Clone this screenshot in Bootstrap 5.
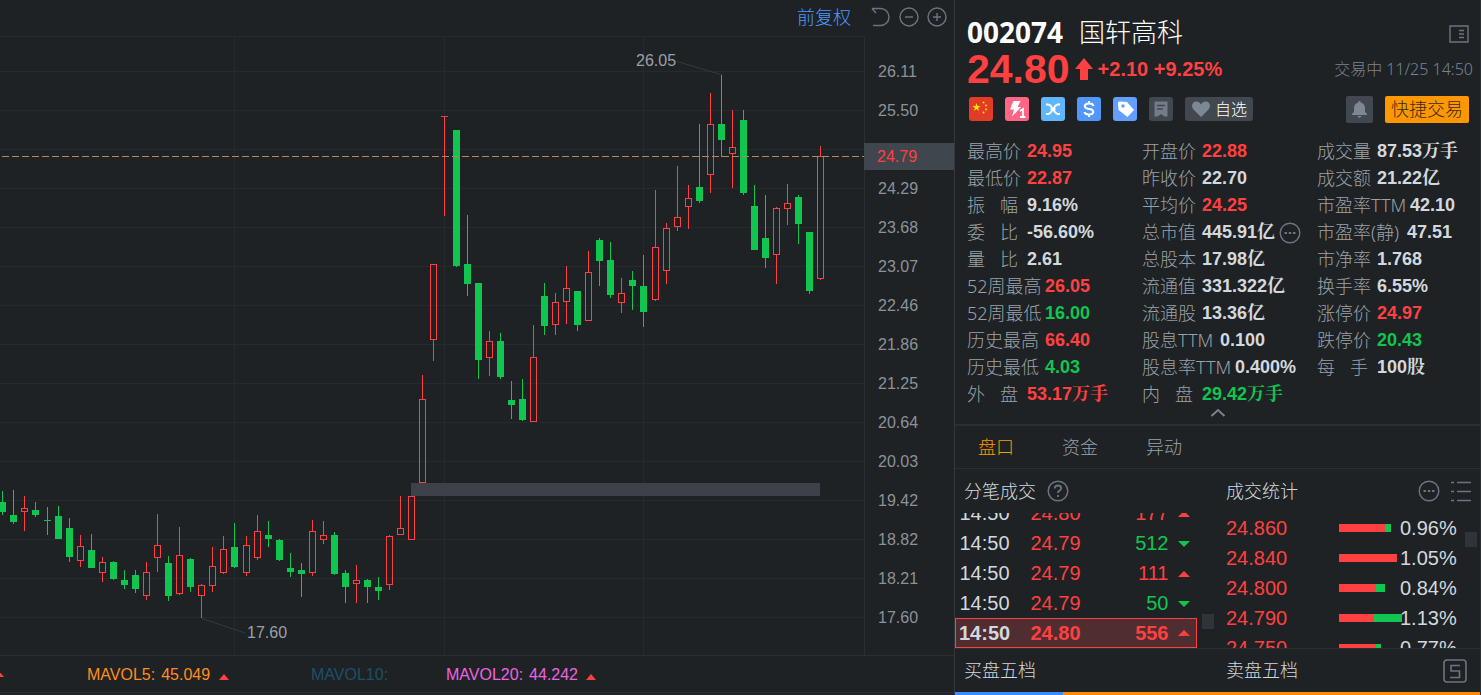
<!DOCTYPE html>
<html lang="zh-CN">
<head>
<meta charset="utf-8">
<meta name="viewport" content="width=device-width, initial-scale=1">
<title>国轩高科 002074</title>
<link href="https://cdn.jsdelivr.net/npm/bootstrap@5.3.0/dist/css/bootstrap.min.css" rel="stylesheet">
<style>
:root{--up:#ff4040;--down:#10c550;--line:#2b2f33;--dim:#9aa1a9;--ink:#d3d8df;--faint:#6b7480}
body{background:#1e2224;color:var(--ink);font-family:"Noto Sans","Noto Sans CJK SC",sans-serif;font-size:18px;font-weight:300;line-height:27px}
.num{font-family:"Liberation Sans","Noto Sans CJK SC",sans-serif}
.up{color:var(--up)}.down{color:var(--down)}
button{background:none;border:0;padding:0;color:inherit;font-weight:inherit}
svg{display:block;flex-shrink:0}
.app{height:100vh;min-height:695px;overflow:hidden}
.chart-pane{min-width:0;border-right:1px solid #33373b}
.chart-tools{height:36px;padding:0 7px 2px 0;gap:8px}
.chart-tools a{color:#4f98ff;margin-right:12px}
.plot{min-width:0}
.axis{width:90px;border-left:1px solid var(--line);border-top:1px solid transparent;padding:15px 0 0 13px;font-size:16px;font-weight:400;color:#8d9299}
.axis li{height:39px;line-height:39px}
.price-tag{top:106px;left:-1px;right:0;height:27px;padding-left:13px;background:#3f464d;line-height:27px}
.mavol{height:38px;border-top:1px solid var(--line);border-bottom:1px solid var(--line);font-size:16px;font-weight:400;margin-bottom:2px}
.mavol span+span{margin-left:6px}
.tri{display:inline-block;border:5px solid transparent;border-top:0;border-bottom:6px solid var(--up)}
.side{width:526px;flex:none;border-right:1px solid var(--line)}
.quote{padding:14px 7px 0 12px}
.title-row{height:36px;line-height:36px}.price-row{height:38px}.icon-row{height:28px;gap:12px;margin:7px 0 15px}
.code{font-size:28px;font-weight:700;color:#fff}
.stock{font-size:26px;color:#fff;margin-left:16px}
.price{font-size:41px;font-weight:700;line-height:38px}
.change{font-size:20px;font-weight:700}
.clock{font-size:16px;color:#7a8490;font-family:"Noto Sans","Noto Sans CJK SC",sans-serif}
.chip{width:24px;height:24px;border-radius:3px}
.watch{height:24px;width:68px;border-radius:3px;background:#414850;color:#fff;font-size:16px;gap:4px;line-height:24px}
.alarm{width:27px;height:27px;border-radius:2px;background:#414850}
.trade{width:84px;height:27px;border-radius:2px;background:#ff9800;color:#3a2b16;line-height:27px}
.facts{grid-template-columns:175px 175px 1fr}
.facts dl>div{height:27px;white-space:nowrap}
.facts dt{font-weight:300;color:var(--dim);width:60px;flex:none}
.facts dt.w4{width:78px}.facts dt.w5{width:90px}.facts dt.w6{width:93px}
.facts dt.pair{display:flex;justify-content:space-between;width:51px;margin-right:9px}
.facts dd{margin:0;font-family:"Liberation Sans","Noto Serif CJK SC","Noto Sans CJK SC",sans-serif;font-weight:700}
.fold{height:16px}
.tabs{height:45px;border-top:2px solid var(--line);border-bottom:1px solid var(--line);padding-left:23px;gap:48px}
.tabs a{color:var(--dim)}.tabs a.active{color:#ff9800}
.halves{grid-template-columns:262px 1fr}
.cap{height:44px;padding:0 9px;gap:11px}
.feed{height:135px;overflow:hidden}
.grid-t{font-size:20px;font-weight:400;line-height:30px;border-collapse:collapse;table-layout:fixed}
.grid-t td{padding:0;height:30px;white-space:nowrap}
.ticks{width:242px}.ticks td:first-child{padding-left:4px}
.ticks .tri,.ticks .trd{border-left-width:6px;border-right-width:6px;vertical-align:middle;margin:0 0 2px 9px}
.trd{display:inline-block;border:6px solid transparent;border-bottom:0;border-top-color:var(--down)}
.now td{font-weight:700;background:#4f2d30;height:29px;line-height:27px;border-top:1px solid var(--up);border-bottom:1px solid var(--up)}
.now td:first-child{border-left:1px solid var(--up);padding-left:3px}.now td:last-child{border-right:1px solid var(--up)}
.thumb{width:12px;height:15px;background:#2f343b}
.bar i{display:block;height:8px;flex:none;background:var(--up)}.bar i+i{background:var(--down)}
.levels{border-top:1px solid var(--line)}
.levels .cap{height:43px}
.ratio{height:3px;background:#ff8a00}
.ratio i{display:block;height:3px;background:#3b8cff}
</style>
</head>
<body>
<div class="app d-flex">
  <main class="chart-pane d-flex flex-column flex-grow-1">
    <div class="chart-tools d-flex align-items-center justify-content-end">
      <a href="#" class="text-decoration-none">前复权</a>
      <button aria-label="还原"><svg width="20" height="20" fill="none" stroke="#6b7480" stroke-width="1.4"><path d="M1 1.500h8.500a8.300 8.300 0 0 1 0 17H2M1 1.500l4 4.500"/></svg></button>
      <button aria-label="缩小"><svg width="20" height="20" fill="none" stroke="#6b7480" stroke-width="1.4"><circle cx="10" cy="10" r="9"/><path d="M6 10h8"/></svg></button>
      <button aria-label="放大"><svg width="20" height="20" fill="none" stroke="#6b7480" stroke-width="1.4"><circle cx="10" cy="10" r="9"/><path d="M6 10h8M10 6v8"/></svg></button>
    </div>
    <div class="d-flex flex-grow-1">
      <div class="plot flex-grow-1 overflow-hidden">
        <svg class="w-100 h-100" shape-rendering="crispEdges"><g id="k" transform="translate(0,-36)"></g></svg>
      </div>
      <div class="axis position-relative num">
        <ul class="list-unstyled m-0">
          <li>26.11</li><li>25.50</li><li></li><li>24.29</li><li>23.68</li><li>23.07</li><li>22.46</li><li>21.86</li><li>21.25</li><li>20.64</li><li>20.03</li><li>19.42</li><li>18.82</li><li>18.21</li><li>17.60</li>
        </ul>
        <div class="price-tag position-absolute up">24.79</div>
      </div>
    </div>
    <div class="mavol num d-flex align-items-center">
      <i class="tri" style="margin-left:-6px"></i>
      <div style="width:307px;padding-left:83px;color:#ff8d1e"><span>MAVOL5:</span><span>45.049</span> <i class="tri ms-1"></i></div>
      <div style="width:135px;color:#1c5068">MAVOL10:</div>
      <div style="color:#ee62e4"><span>MAVOL20:</span><span>44.242</span> <i class="tri ms-1"></i></div>
    </div>
  </main>

  <aside class="side d-flex flex-column">
    <div class="quote">
      <div class="title-row d-flex align-items-center">
        <span class="code">002074</span><span class="stock">国轩高科</span>
        <button class="ms-auto me-1 mt-1" aria-label="布局"><svg width="20" height="18" fill="none" stroke="#6b7480" stroke-width="1.4"><path d="M1 1h18v16H1zM10 5.500h5M10 9h5M10 12.500h5"/></svg></button>
      </div>
      <div class="price-row d-flex align-items-center up num">
        <span class="price">24.80</span>
        <svg class="ms-1" width="20" height="22" fill="#ff4040"><path d="M10 0l9 11h-5v11H6V11H1z"/></svg>
        <span class="change ms-1">+2.10 +9.25%</span>
        <span class="clock ms-auto">交易中 11/25 14:50</span>
      </div>
      <div class="icon-row d-flex align-items-center">
        <svg class="chip" style="margin-left:2px;background:#e23c27" viewBox="0 0 24 24" fill="#ffe600"><path d="M7.500 6l1 3h3l-2.400 1.900.9 3.100-2.500-1.900L5 14l.9-3.100L3.500 9h3z"/><circle cx="14.500" cy="5.500" r="1"/><circle cx="17" cy="8.500" r="1"/><circle cx="17" cy="12.500" r="1"/><circle cx="14.500" cy="15.500" r="1"/></svg>
        <svg class="chip" style="background:#ff6685" viewBox="0 0 24 24" fill="#fff"><path d="M8.500 4h7l-3 6h3.500L7 19.500l2-7H5z"/><path d="M15 14l3-2v8M15 20h5.500" fill="none" stroke="#fff" stroke-width="1.800"/></svg>
        <svg class="chip" style="background:#60b7ff" viewBox="0 0 24 24" fill="none" stroke="#fff" stroke-width="2"><path d="M5 7.500h2q2 0 3.500 2.500t0 4.500Q9 17 7 17H5M19 7.500h-2q-2 0-3.500 2.500t0 4.500q1.500 2.500 3.500 2.500h2M9.500 12.300h5"/></svg>
        <svg class="chip" style="background:#5298fc" viewBox="0 0 24 24" fill="none" stroke="#fff" stroke-width="2"><path d="M16.500 9Q16 6.500 12 6.500T7.700 9.200Q8 11.700 12 12t4.300 2.800Q16 17.500 12 17.500T7.500 15M12 4v2.500M12 17.500V20"/></svg>
        <svg class="chip" style="background:#649fff" viewBox="0 0 24 24"><path d="M5 6q0-1.500 1.500-1.500l7.500.5 7 8-6.500 7L5.500 13z" fill="#fff"/><circle cx="10" cy="9" r="1.800" fill="#649fff"/></svg>
        <svg class="chip" style="background:#414850" viewBox="0 0 24 24"><path d="M5.500 4.500h13v15h-3L12 17l-3.500 2.500h-3z" fill="#737c87"/><path d="M8 8.500h8M8 12h6" stroke="#414850" stroke-width="1.500"/></svg>
        <button class="watch d-flex align-items-center justify-content-center"><svg width="20" height="18" viewBox="0 0 20 18" fill="#7e8894"><path d="M10 17L2.500 9.500C-.5 6 1.500 1.500 5.200 1.500c2.300 0 3.800 1.200 4.800 2.900 1-1.700 2.500-2.900 4.800-2.900 3.700 0 5.700 4.500 2.700 8z"/></svg>自选</button>
        <button class="alarm ms-auto d-flex align-items-center justify-content-center" aria-label="预警"><svg width="17" height="19" fill="#7e8894"><path d="M7.500 1h2v1.500c3 .7 4.500 2.500 4.500 5.500v4l2 2v1H1v-1l2-2V8c0-3 1.500-4.800 4.500-5.500zM6 16h5l-2.500 2z"/></svg></button>
        <button class="trade me-1">快捷交易</button>
      </div>
      <div class="facts d-grid">
        <dl class="m-0">
          <div class="d-flex"><dt>最高价</dt><dd class="up">24.95</dd></div>
          <div class="d-flex"><dt>最低价</dt><dd class="up">22.87</dd></div>
          <div class="d-flex"><dt class="pair"><span>振</span><span>幅</span></dt><dd>9.16%</dd></div>
          <div class="d-flex"><dt class="pair"><span>委</span><span>比</span></dt><dd>-56.60%</dd></div>
          <div class="d-flex"><dt class="pair"><span>量</span><span>比</span></dt><dd>2.61</dd></div>
          <div class="d-flex"><dt class="w4">52周最高</dt><dd class="up">26.05</dd></div>
          <div class="d-flex"><dt class="w4">52周最低</dt><dd class="down">16.00</dd></div>
          <div class="d-flex"><dt class="w4">历史最高</dt><dd class="up">66.40</dd></div>
          <div class="d-flex"><dt class="w4">历史最低</dt><dd class="down">4.03</dd></div>
          <div class="d-flex"><dt class="pair"><span>外</span><span>盘</span></dt><dd class="up">53.17万手</dd></div>
        </dl>
        <dl class="m-0">
          <div class="d-flex"><dt>开盘价</dt><dd class="up">22.88</dd></div>
          <div class="d-flex"><dt>昨收价</dt><dd>22.70</dd></div>
          <div class="d-flex"><dt>平均价</dt><dd class="up">24.25</dd></div>
          <div class="d-flex align-items-center"><dt>总市值</dt><dd>445.91亿</dd><button class="ms-1" aria-label="市值详情"><svg width="22" height="22" fill="none" stroke="#6b7480" stroke-width="1.400"><circle cx="11" cy="11" r="9.800"/><path d="M5.500 11H8M9.800 11h2.500M14 11h2.500" stroke-width="2.200"/></svg></button></div>
          <div class="d-flex"><dt>总股本</dt><dd>17.98亿</dd></div>
          <div class="d-flex"><dt>流通值</dt><dd>331.322亿</dd></div>
          <div class="d-flex"><dt>流通股</dt><dd>13.36亿</dd></div>
          <div class="d-flex"><dt class="w4">股息TTM</dt><dd>0.100</dd></div>
          <div class="d-flex"><dt class="w6">股息率TTM</dt><dd>0.400%</dd></div>
          <div class="d-flex"><dt class="pair"><span>内</span><span>盘</span></dt><dd class="down">29.42万手</dd></div>
        </dl>
        <dl class="m-0">
          <div class="d-flex"><dt>成交量</dt><dd>87.53万手</dd></div>
          <div class="d-flex"><dt>成交额</dt><dd>21.22亿</dd></div>
          <div class="d-flex"><dt class="w6">市盈率TTM</dt><dd>42.10</dd></div>
          <div class="d-flex"><dt class="w5">市盈率(静)</dt><dd>47.51</dd></div>
          <div class="d-flex"><dt>市净率</dt><dd>1.768</dd></div>
          <div class="d-flex"><dt>换手率</dt><dd>6.55%</dd></div>
          <div class="d-flex"><dt>涨停价</dt><dd class="up">24.97</dd></div>
          <div class="d-flex"><dt>跌停价</dt><dd class="down">20.43</dd></div>
          <div class="d-flex"><dt class="pair"><span>每</span><span>手</span></dt><dd>100股</dd></div>
        </dl>
      </div>
    </div>
    <button class="fold d-flex justify-content-center" aria-label="收起"><svg width="16" height="9" fill="none" stroke="#7b838d" stroke-width="2"><path d="M1.500 8L8 2l6.500 6"/></svg></button>
    <nav class="tabs d-flex align-items-center">
      <a href="#" class="active text-decoration-none">盘口</a><a href="#" class="text-decoration-none">资金</a><a href="#" class="text-decoration-none">异动</a>
    </nav>
    <div class="halves d-grid">
      <section>
        <div class="cap d-flex align-items-center">分笔成交
          <svg width="22" height="22" fill="none" stroke="#6b7480" stroke-width="1.500"><circle cx="11" cy="11" r="9.800"/><path d="M7.800 8.500q0-3 3.200-3t3.200 2.700q0 1.500-1.700 2.400T11 13.200M11 15v2" stroke-width="1.800"/></svg>
        </div>
        <div class="feed d-flex align-items-end">
          <table class="grid-t ticks num">
            <colgroup><col style="width:75px"><col style="width:78px"><col style="width:60px"><col></colgroup>
            <tr><td>14:50</td><td class="up">24.80</td><td class="up text-end">177</td><td><i class="tri"></i></td></tr>
            <tr><td>14:50</td><td class="up">24.79</td><td class="down text-end">512</td><td><i class="trd"></i></td></tr>
            <tr><td>14:50</td><td class="up">24.79</td><td class="up text-end">111</td><td><i class="tri"></i></td></tr>
            <tr><td>14:50</td><td class="up">24.79</td><td class="down text-end">50</td><td><i class="trd"></i></td></tr>
            <tr class="now"><td>14:50</td><td class="up">24.80</td><td class="up text-end">556</td><td><i class="tri"></i></td></tr>
          </table>
          <div class="thumb" style="margin:0 0 19px 5px"></div>
        </div>
      </section>
      <section>
        <div class="cap d-flex align-items-center">成交统计
          <button class="ms-auto" aria-label="更多"><svg width="22" height="22" fill="none" stroke="#6b7480" stroke-width="1.400"><circle cx="11" cy="11" r="9.800"/><path d="M5.500 11H8M9.800 11h2.500M14 11h2.500" stroke-width="2.200"/></svg></button>
          <button aria-label="列表"><svg width="20" height="22" stroke="#6b7480" stroke-width="1.400"><path d="M0 2.500h3M6 2.500h14M0 11.500h3M6 11.500h14M0 20.500h3M6 20.500h14"/></svg></button>
        </div>
        <div class="feed d-flex">
          <table class="grid-t num" style="width:239px;margin-left:9px">
            <colgroup><col style="width:113px"><col style="width:61px"><col style="width:65px"></colgroup>
            <tr><td class="up">24.860</td><td><div class="bar d-flex"><i style="width:46px"></i><i style="width:6px"></i></div></td><td>0.96%</td></tr>
            <tr><td class="up">24.840</td><td><div class="bar d-flex"><i style="width:58px"></i></div></td><td>1.05%</td></tr>
            <tr><td class="up">24.800</td><td><div class="bar d-flex"><i style="width:37px"></i><i style="width:9px"></i></div></td><td>0.84%</td></tr>
            <tr><td class="up">24.790</td><td><div class="bar d-flex"><i style="width:35px"></i><i style="width:28px"></i></div></td><td>1.13%</td></tr>
            <tr><td class="up">24.750</td><td><div class="bar d-flex"><i style="width:37px"></i><i style="width:5px"></i></div></td><td>0.77%</td></tr>
          </table>
          <div class="thumb" style="margin-top:19px"></div>
        </div>
      </section>
    </div>
    <div class="levels halves d-grid">
      <div class="cap d-flex align-items-center">买盘五档</div>
      <div class="cap d-flex align-items-center justify-content-between">卖盘五档
        <svg class="me-1" width="24" height="24" fill="none" stroke="#6b7480" stroke-width="1.600"><rect x="1" y="1" width="22" height="22" rx="3"/><path d="M17 6.500H8V12h8.500v6.500H7"/></svg></div>
    </div>
    <div class="ratio"><i style="width:108px"></i></div>
  </aside>
</div>
<script>
// Each candle: wick x, high y, low y, body top, body bottom; a leading minus on x marks a falling day.
const candles=[[-2,491,515,502,512],[-13,490,524,515,522],[24,496,531,508,512],[-35,502,517,510,515],[-47,507,535,520,521],[-58,506,539,516,539],[-69,518,562,528,557],[80,535,567,546,561],[-91,534,568,550,568],[102,557,582,562,573],[-113,561,580,562,579],[-124,570,589,580,585],[-135,570,593,575,589],[146,562,600,572,596],[157,514,572,545,558],[-168,556,601,563,596],[179,527,595,555,594],[-190,558,592,559,587],[201,584,618,585,596],[212,547,592,566,586],[223,536,574,549,573],[-234,523,568,547,567],[246,536,576,545,573],[257,515,560,531,558],[-268,521,547,535,539],[-279,539,561,540,560],[-290,553,577,568,572],[-301,563,597,570,574],[312,520,576,531,573],[323,521,544,535,540],[-334,532,575,535,574],[-345,570,603,573,587],[356,565,603,580,584],[-367,579,603,580,587],[-378,577,600,587,591],[389,535,590,536,585],[400,496,535,528,535],[411,496,540,496,540],[422,375,483,399,483],[433,264,361,264,340],[444,116,216,116,117],[-456,130,267,130,266],[-467,215,296,264,284],[-478,283,379,283,360],[489,331,376,341,358],[-500,333,379,341,377],[-511,381,419,400,405],[-522,379,421,399,420],[533,325,422,357,422],[-544,283,335,296,326],[555,293,335,302,325],[566,266,324,288,302],[-577,291,331,291,325],[588,251,321,272,321],[-599,238,286,240,261],[-610,242,298,260,295],[621,278,313,293,303],[-632,271,310,280,286],[-643,255,327,286,312],[655,190,301,247,300],[666,223,284,228,271],[677,166,231,217,227],[688,185,229,198,207],[-699,124,203,187,201],[710,93,193,124,175],[-721,75,157,124,140],[732,110,188,147,154],[-743,110,195,120,193],[-754,185,250,206,250],[-765,195,268,238,258],[776,207,284,208,255],[787,184,225,203,209],[-798,195,244,197,224],[-809,232,294,232,291],[820,146,280,156,279]];
const r=(x,y,w,h,c)=>`<rect x="${x}" y="${y}" width="${w}" height="${h}" fill="${c}"/>`;
let s=r(0,36,'100%',1,'#262a2e');
for(let y=71;y<=617;y+=39)s+=r(0,y,'100%',1,'#262a2e');
for(const x of[234,444,643])s+=r(x,36,1,620,'#262a2e');
s+=r(411,483,409,13,'#3d4249');
for(const[v,h,l,t,b]of candles){
  const x=Math.abs(v);
  if(v<0)s+=r(x,h,1,l-h,'#10c550')+r(x-3,t,7,b-t,'#10c550');
  else{
    s+=r(x,h,1,t-h,'#ff4040')+r(x,b,1,l-b,'#ff4040');
    s+=b-t<2?r(x-3,t,7,1,'#ff4040'):`<rect x="${x-2.5}" y="${t+.5}" width="6" height="${b-t-1}" fill="none" stroke="#ff4040"/>`;
  }
}
s+='<path d="M-8 156.5H2000" stroke="#b08a5e" stroke-dasharray="7 3"/>';
s+='<g shape-rendering="auto" stroke="#353a3e"><path d="M677 61.500L721 74.500M202 618.500L245 633"/></g>';
s+='<g class="num" fill="#9aa0a8" font-size="16" font-weight="400"><text x="636" y="66">26.05</text><text x="247" y="638">17.60</text></g>';
document.getElementById('k').innerHTML=s;
</script>
<script src="https://cdn.jsdelivr.net/npm/bootstrap@5.3.0/dist/js/bootstrap.bundle.min.js"></script>
</body>
</html>
